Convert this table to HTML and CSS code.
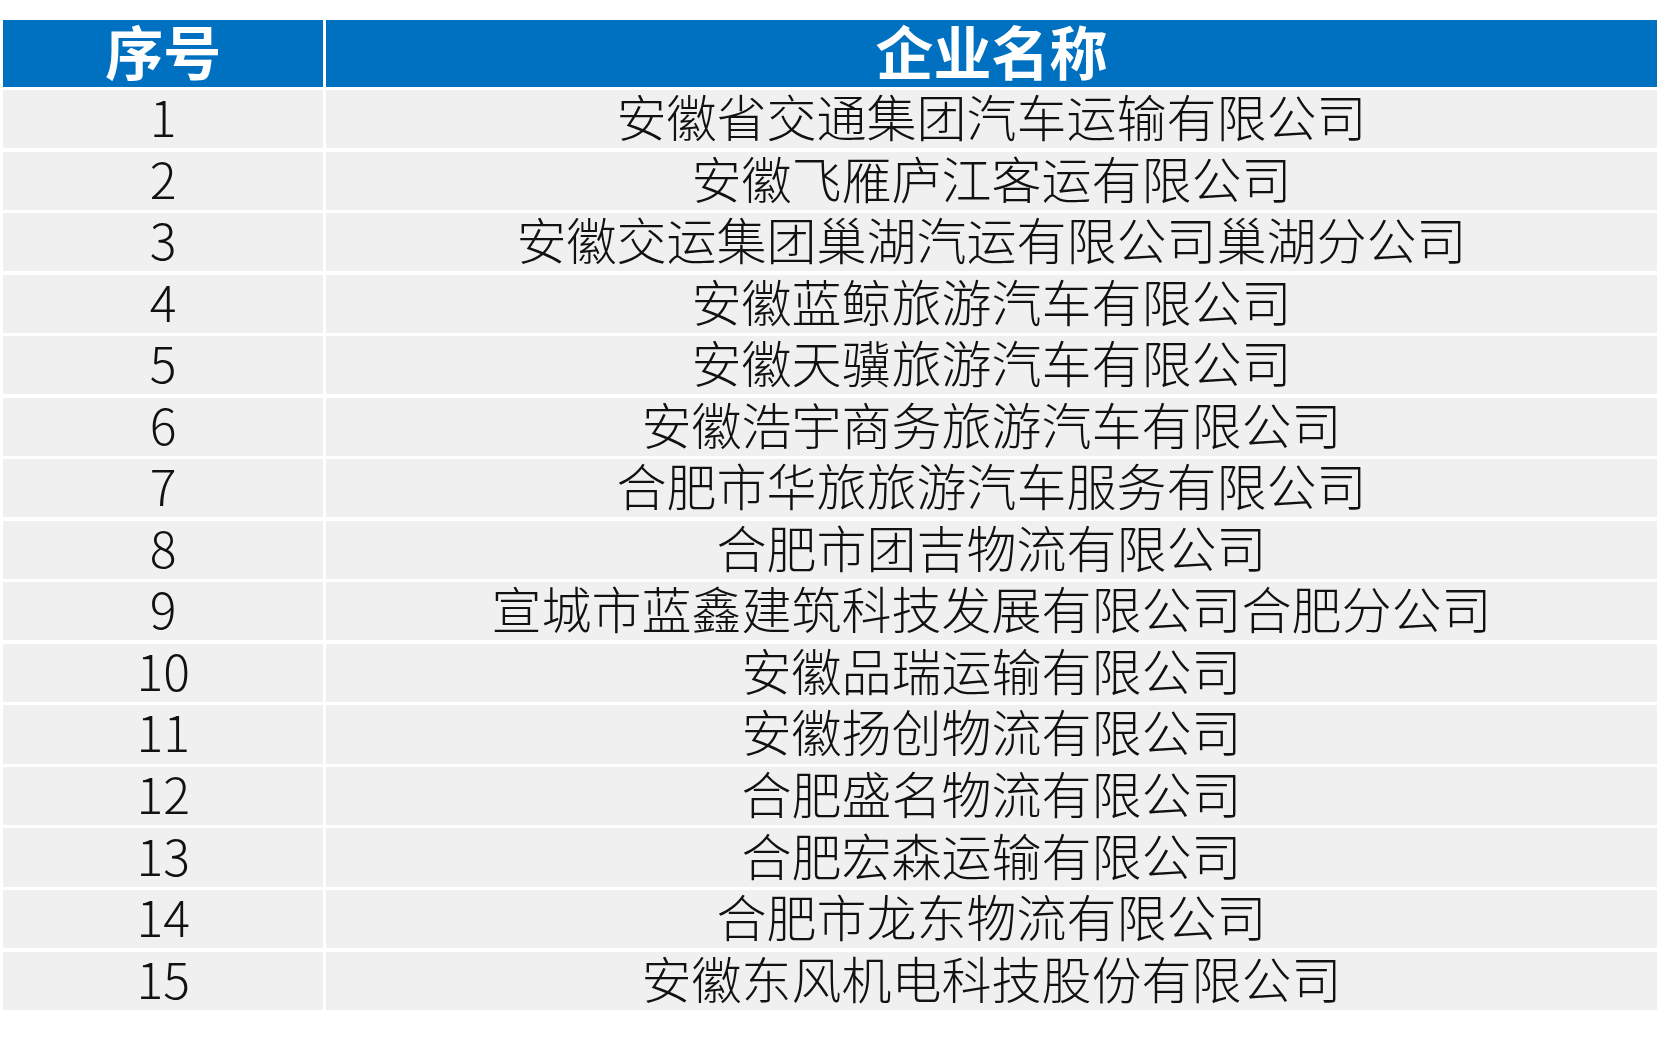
FILE: index.html
```html
<!DOCTYPE html>
<html lang="zh-CN">
<head>
<meta charset="utf-8">
<title>企业名单</title>
<link rel="stylesheet" href="styles.css">
</head>
<body>
<div class="table">
  <div class="cell head">序号</div><div class="cell head">企业名称</div>
  <div class="cell">1</div><div class="cell">安徽省交通集团汽车运输有限公司</div>
  <div class="cell">2</div><div class="cell">安徽飞雁庐江客运有限公司</div>
  <div class="cell">3</div><div class="cell">安徽交运集团巢湖汽运有限公司巢湖分公司</div>
  <div class="cell">4</div><div class="cell">安徽蓝鲸旅游汽车有限公司</div>
  <div class="cell">5</div><div class="cell">安徽天骥旅游汽车有限公司</div>
  <div class="cell">6</div><div class="cell">安徽浩宇商务旅游汽车有限公司</div>
  <div class="cell">7</div><div class="cell">合肥市华旅旅游汽车服务有限公司</div>
  <div class="cell">8</div><div class="cell">合肥市团吉物流有限公司</div>
  <div class="cell">9</div><div class="cell">宣城市蓝鑫建筑科技发展有限公司合肥分公司</div>
  <div class="cell">10</div><div class="cell">安徽品瑞运输有限公司</div>
  <div class="cell">11</div><div class="cell">安徽扬创物流有限公司</div>
  <div class="cell">12</div><div class="cell">合肥盛名物流有限公司</div>
  <div class="cell">13</div><div class="cell">合肥宏森运输有限公司</div>
  <div class="cell">14</div><div class="cell">合肥市龙东物流有限公司</div>
  <div class="cell">15</div><div class="cell">安徽东风机电科技股份有限公司</div>
</div>
</body>
</html>
```
FILE: styles.css
```css
html, body {
  margin: 0;
  padding: 0;
  background: #ffffff;
}
body {
  padding: 20px 0 0 3px;
  font-family: "Noto Sans CJK SC", "Noto Sans", sans-serif;
}
.table {
  width: 1654px;
  display: grid;
  grid-template-columns: 320.3px 1fr;
  grid-template-rows: 66.7px repeat(15, 58.15px);
  column-gap: 2.7px;
  row-gap: 3.4px;
}
.cell {
  background: #f0f0f0;
  color: #111111;
  font-size: 50px;
  font-weight: 300;
  display: flex;
  align-items: center;
  justify-content: center;
  white-space: nowrap;
  line-height: 1;
  padding-bottom: 8px;
}
.head {
  background: #0070c0;
  color: #ffffff;
  font-size: 58px;
  font-weight: 700;
  padding-bottom: 6px;
}
```
